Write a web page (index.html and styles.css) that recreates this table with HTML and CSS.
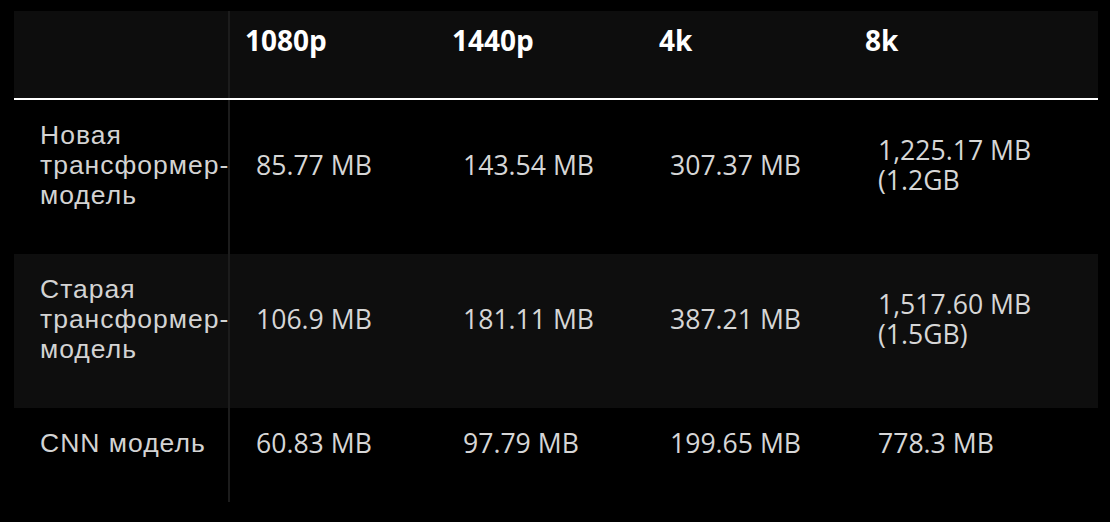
FILE: index.html
```html
<!DOCTYPE html>
<html lang="ru">
<head>
<meta charset="utf-8">
<title>Model memory</title>
<link rel="stylesheet" href="styles.css">
</head>
<body>
<div class="table">
  <div class="row head">
    <div class="cell label"></div>
    <div class="cell">1080p</div>
    <div class="cell">1440p</div>
    <div class="cell">4k</div>
    <div class="cell">8k</div>
  </div>
  <div class="row">
    <div class="cell label"><span>Новая</span><span>трансформер-</span><span>модель</span></div>
    <div class="cell">85.77 MB</div>
    <div class="cell">143.54 MB</div>
    <div class="cell">307.37 MB</div>
    <div class="cell last"><span>1,225.17 MB</span><span>(1.2GB</span></div>
  </div>
  <div class="row alt">
    <div class="cell label"><span>Старая</span><span>трансформер-</span><span>модель</span></div>
    <div class="cell">106.9 MB</div>
    <div class="cell">181.11 MB</div>
    <div class="cell">387.21 MB</div>
    <div class="cell last"><span>1,517.60 MB</span><span>(1.5GB)</span></div>
  </div>
  <div class="row">
    <div class="cell label">CNN модель</div>
    <div class="cell">60.83 MB</div>
    <div class="cell">97.79 MB</div>
    <div class="cell">199.65 MB</div>
    <div class="cell last">778.3 MB</div>
  </div>
</div>
</body>
</html>
```

FILE: styles.css
```css
html, body {
  margin: 0;
  background: #000;
}
body {
  width: 1110px;
  height: 522px;
  overflow: hidden;
}
.table {
  margin: 11px 0 0 14px;
  width: 1084px;
}
.row {
  display: grid;
  grid-template-columns: 216px 207px 207px 206px 248px;
  color: #d6d6d6;
  font-family: "Open Sans", "Noto Sans", sans-serif;
  font-size: 26.6px;
  line-height: 30px;
}
.row.alt {
  background: #0e0e0e;
}
.cell {
  display: flex;
  flex-direction: column;
  justify-content: center;
  padding: 20px 0 44px 26px;
  white-space: nowrap;
}
.cell span {
  display: block;
  height: 30px;
}
.cell.label {
  font-family: "Liberation Sans", Arial, sans-serif;
  font-size: 26.5px;
  letter-spacing: 1px;
  padding-left: 26px;
  border-right: 2px solid #1c1c1c;
  color: #d3d3d3;
}
.cell.last {
  padding-left: 28px;
}
.row.head {
  background: #0d0d0d;
  border-bottom: 2px solid #fff;
  color: #fff;
  font-weight: 700;
  font-size: 28px;
  line-height: 38px;
}
.row.head .cell {
  padding: 10px 0 39px 15px;
  justify-content: flex-start;
}
.row.head .cell.label {
  padding-left: 26px;
}
```
